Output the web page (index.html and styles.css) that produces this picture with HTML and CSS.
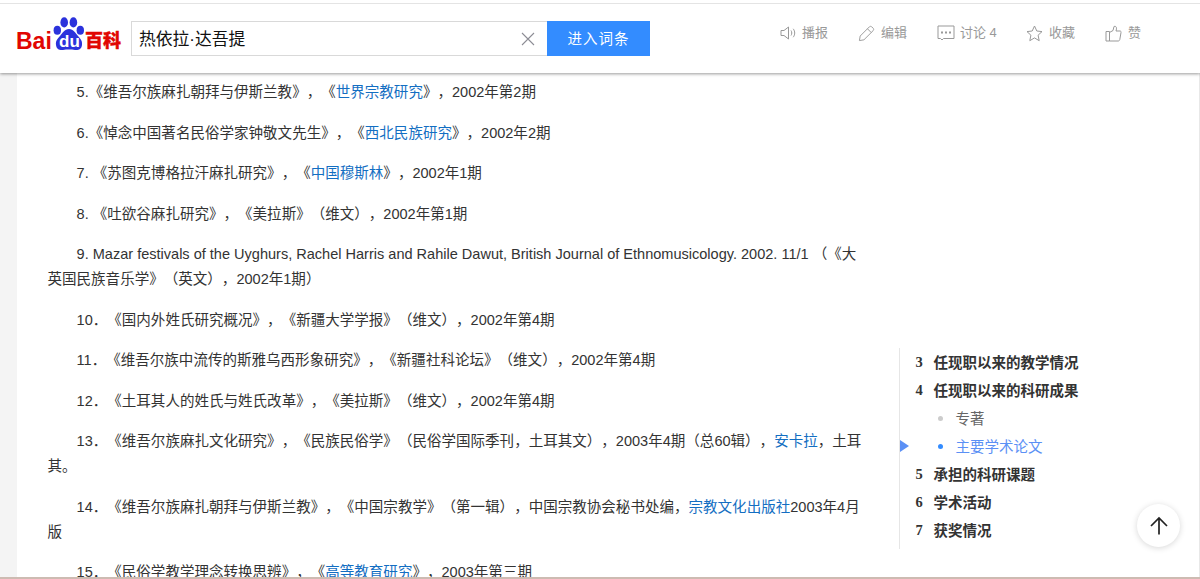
FILE: index.html
```html
<!DOCTYPE html>
<html lang="zh-CN">
<head>
  <meta charset="UTF-8">
  <meta name="viewport" content="width=device-width, initial-scale=1.0">
  <title>热依拉·达吾提_百度百科</title>
  <link rel="stylesheet" href="styles.css">
</head>
<body>
  <header class="header">
    <a class="logo" href="#">
      <span class="logo-bai">Bai</span>
      <span class="logo-paw">
        <svg width="32" height="34" viewBox="0 0 32 34" fill="#2b32dc">
          <ellipse cx="4.3" cy="13.3" rx="3.7" ry="4.5"/>
          <ellipse cx="11.2" cy="5.4" rx="3.8" ry="5.1"/>
          <ellipse cx="20.4" cy="5.4" rx="3.8" ry="5.1"/>
          <ellipse cx="27.3" cy="13.3" rx="3.7" ry="4.5"/>
          <path d="M16 12c4.500 0 6.500 4 9 7 2.500 3 4.500 4.500 4 9-.5 4.500-4 5.500-7 5-2-.4-4-.5-6-.5s-4 .1-6 .5c-3 .5-6.500-.5-7-5-.5-4.500 1.500-6 4-9 2.500-3 4.500-7 9-7z"/>
        </svg>
        <span class="logo-du">du</span>
      </span>
      <span class="logo-baike">百科</span>
    </a>
    <form class="search">
      <div class="search-box">
        <span class="search-text">热依拉·达吾提</span>
        <svg class="search-clear" width="14" height="14" viewBox="0 0 14 14" fill="none" stroke="#8d8d95" stroke-width="1.1">
          <path d="M1 1l12 12M13 1L1 13"/>
        </svg>
      </div>
      <button class="search-btn" type="button">进入词条</button>
    </form>
    <ul class="tools">
      <li class="tool tool-play">
        <svg width="16" height="16" viewBox="0 0 16 16"><path d="M1 5.500h3L8.500 2v12L4 10.500H1zM11 5.500c1 1.500 1 3.500 0 5M13.200 3.800c2 2.500 2 6 0 8.400"/></svg>
        <span>播报</span>
      </li>
      <li class="tool tool-edit">
        <svg width="17" height="17" viewBox="0 0 18 18"><path d="M1.500 16.500l.8-4.800L12 2c.8-.8 1.800-.8 2.600 0l1.400 1.400c.8.8.8 1.800 0 2.600l-9.700 9.700zM10 4l4 4"/></svg>
        <span>编辑</span>
      </li>
      <li class="tool tool-talk">
        <svg width="18" height="16" viewBox="0 0 18 16"><path d="M1 1h16v12.500H6.500L5 15l-1.500-1.500H1z"/><path d="M4 7.500h2M8 7.500h2M12 7.500h2" stroke-width="2"/></svg>
        <span>讨论 4</span>
      </li>
      <li class="tool tool-fav">
        <svg width="17" height="17" viewBox="0 0 17 17"><path d="M8.500 1l2.300 5 5.200.6-3.900 3.600 1.100 5.500-4.700-2.800-4.700 2.800 1.100-5.500L1 6.600 6.200 6z"/></svg>
        <span>收藏</span>
      </li>
      <li class="tool tool-like">
        <svg width="17" height="17" viewBox="0 0 17 17"><path d="M1 6.500h3.500V16H1zM4.500 7.500L8 5.500 9 1.500c2.500-.8 3 1.500 2 4.500h4c.8 0 1.200.6 1 1.500l-1.200 7c-.2 1-.8 1.500-1.800 1.500H4.500"/></svg>
        <span>赞</span>
      </li>
    </ul>
  </header>

  <main class="page">
    <article class="content">
      <p>5.《维吾尔族麻扎朝拜与伊斯兰教》，《<a href="#">世界宗教研究</a>》，2002年第2期</p>
      <p>6.《悼念中国著名民俗学家钟敬文先生》，《<a href="#">西北民族研究</a>》，2002年2期</p>
      <p>7. 《苏图克博格拉汗麻扎研究》，《<a href="#">中国穆斯林</a>》，2002年1期</p>
      <p>8. 《吐欲谷麻扎研究》，《美拉斯》（维文），2002年第1期</p>
      <p>9. Mazar festivals of the Uyghurs, Rachel Harris and Rahile Dawut, British Journal of Ethnomusicology. 2002. 11/1 （《大英国民族音乐学》（英文），2002年1期）</p>
      <p>10．《国内外姓氏研究概况》，《新疆大学学报》（维文），2002年第4期</p>
      <p>11．《维吾尔族中流传的斯雅乌西形象研究》，《新疆社科论坛》（维文），2002年第4期</p>
      <p>12．《土耳其人的姓氏与姓氏改革》，《美拉斯》（维文），2002年第4期</p>
      <p>13．《维吾尔族麻扎文化研究》，《民族民俗学》（民俗学国际季刊，土耳其文），2003年4期（总60辑），<a href="#">安卡拉</a>，土耳其。</p>
      <p>14．《维吾尔族麻扎朝拜与伊斯兰教》，《中国宗教学》（第一辑），中国宗教协会秘书处编，<a href="#">宗教文化出版社</a>2003年4月版</p>
      <p>15．《民俗学教学理念转换思辨》，《<a href="#">高等教育研究</a>》，2003年第三期</p>
    </article>

    <aside class="side">
      <ul class="catalog">
        <li><span class="num">3</span><a href="#">任现职以来的教学情况</a></li>
        <li><span class="num">4</span><a href="#">任现职以来的科研成果</a></li>
        <li class="sub"><i class="dot"></i><a href="#">专著</a></li>
        <li class="sub active"><i class="arrow"></i><i class="dot"></i><a href="#">主要学术论文</a></li>
        <li><span class="num">5</span><a href="#">承担的科研课题</a></li>
        <li><span class="num">6</span><a href="#">学术活动</a></li>
        <li><span class="num">7</span><a href="#">获奖情况</a></li>
      </ul>
    </aside>
  </main>

  <a class="to-top" href="#">
    <svg width="20" height="20" viewBox="0 0 20 20" fill="none" stroke="#222" stroke-width="1.7"><path d="M10 18.500V2M2 10l8-8 8 8"/></svg>
  </a>
</body>
</html>
```

FILE: styles.css
```css
* {
  box-sizing: border-box;
}
body {
  margin: 0;
  height: 579px;
  overflow: hidden;
  display: flex;
  flex-direction: column;
  border-top: 3px solid #fff;
  border-bottom: 2px solid #cdbbb2;
  background: #f4f4f4;
  color: #333;
  font-family: "Liberation Sans", "Noto Sans CJK SC", sans-serif;
  font-size: 14.5px;
  text-spacing-trim: space-all;
}
ul {
  list-style: none;
  margin: 0;
  padding: 0;
}
a {
  color: #136ec2;
  text-decoration: none;
}

/* header */
.header {
  position: relative;
  z-index: 2;
  flex: none;
  display: flex;
  align-items: flex-start;
  height: 70px;
  padding-left: 16px;
  border-top: 1px solid #e4e4e4;
  background: #fff;
  box-shadow: 0 1px 3px rgba(0, 0, 0, 0.4);
}
.logo {
  display: flex;
  width: 115px;
  padding-top: 13px;
  color: #e10602;
  font-weight: bold;
  line-height: 1;
}
.logo-bai {
  width: 37px;
  padding-top: 13px;
  font-size: 23px;
}
.logo-paw {
  position: relative;
  width: 32px;
  height: 34px;
}
.logo-du {
  position: absolute;
  left: 6px;
  top: 16px;
  color: #fff;
  font-size: 17px;
}
.logo-baike {
  padding-top: 15px;
  font-size: 18px;
  font-weight: 900;
  white-space: nowrap;
  -webkit-text-stroke: 0.4px #e10602;
}
.search {
  display: flex;
  padding-top: 17px;
}
.search-box {
  display: flex;
  align-items: center;
  justify-content: space-between;
  width: 416px;
  height: 35px;
  padding: 0 12px 0 7px;
  border: 1px solid #d9d9d9;
  border-right: 0;
}
.search-text {
  padding-top: 3px;
  color: #111;
  font-size: 16.8px;
  line-height: 30px;
}
.search-btn {
  width: 103px;
  height: 35px;
  padding: 0 0 2px;
  border: 0;
  background: #338cff;
  color: #fff;
  font-family: inherit;
  font-size: 14.5px;
  letter-spacing: 1px;
}
.tools {
  display: flex;
  padding-top: 19px;
  margin-left: 130px;
  color: #999;
  font-size: 13px;
  line-height: 20px;
}
.tool {
  display: flex;
  align-items: center;
  gap: 6px;
  height: 20px;
  white-space: nowrap;
}
.tool svg {
  fill: none;
  stroke: #999;
  stroke-width: 1;
}
.tool-play {
  width: 78px;
}
.tool-edit {
  width: 79px;
}
.tool-talk {
  width: 89px;
  gap: 5px;
}
.tool-fav {
  width: 79px;
}

/* article */
.page {
  flex: 1;
  display: flex;
  min-height: 0;
  margin-left: 17px;
  background: #fff;
  border-right: 1px solid #e8e8e8;
}
.content {
  width: 818px;
  margin: 7px 0 0 30.5px;
  font-size: 14.54px;
}
.content p {
  margin: 0 0 15.5px;
  line-height: 25px;
  text-indent: 2em;
}

/* catalog */
.side {
  margin: 275px 0 0 33px;
}
.catalog {
  height: 201px;
  border-left: 1px solid #e6e6e6;
}
.catalog li {
  display: flex;
  align-items: center;
  height: 28.1px;
  padding-left: 16px;
  font-weight: bold;
}
.catalog a {
  color: #333;
  margin-top: -2px;
}
.num {
  width: 18px;
  font-family: "Liberation Serif", serif;
}
.catalog .sub {
  position: relative;
  padding-left: 38px;
  font-weight: normal;
}
.catalog .sub a {
  color: #666;
}
.dot {
  width: 5px;
  height: 5px;
  margin-right: 13px;
  border-radius: 50%;
  background: #ccc;
}
.catalog .active a {
  color: #5b90f5;
}
.active .dot {
  background: #338cff;
}
.arrow {
  position: absolute;
  left: 0;
  border: 6px solid transparent;
  border-left: 9px solid #5b90f5;
  border-right: 0;
}
.to-top {
  position: fixed;
  z-index: 3;
  right: 20px;
  bottom: 32px;
  display: flex;
  align-items: center;
  justify-content: center;
  width: 43px;
  height: 43px;
  border-radius: 50%;
  background: #fff;
  box-shadow: 0 1px 6px rgba(0, 0, 0, 0.16);
}
```
